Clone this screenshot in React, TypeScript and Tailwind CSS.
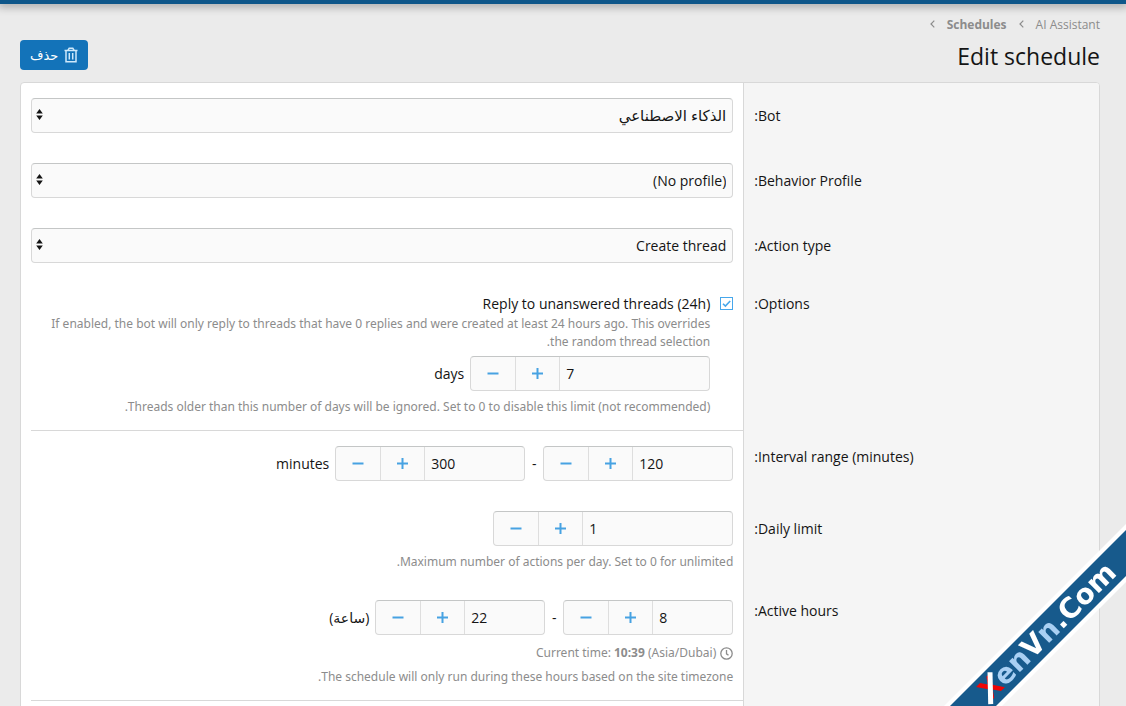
import React, { FC, InputHTMLAttributes, ReactNode, SelectHTMLAttributes, useState } from "react";
import { clsx } from "clsx";

interface FormRowProps {
  label: string;
  htmlFor?: string;
  // lines the label up with the text of the control next to it
  inputLabel?: boolean;
  children: ReactNode;
}

const FormRow: FC<FormRowProps> = ({ label, htmlFor, inputLabel, children }) => {
  return (
    <div className="flex">
      <div
        className={clsx(
          "w-[33%] shrink-0 border-l border-[#d8d8d8] bg-[#f5f5f5] px-2.5 text-left",
          inputLabel ? "pt-[22px]" : "pt-[15px]"
        )}
      >
        <label htmlFor={htmlFor} className="block">
          {label}:
        </label>
      </div>
      <div className="min-w-0 flex-1 px-2.5 py-[15px]">{children}</div>
    </div>
  );
};

const Separator = () => (
  <div className="flex">
    <div className="w-[33%] shrink-0 border-l border-[#d8d8d8] bg-[#f5f5f5]" />
    <hr className="ml-2.5 flex-1 border-[#d8d8d8]" />
  </div>
);

const Hint: FC<{ children: ReactNode; className?: string }> = ({ children, className }) => (
  <p
    className={clsx(
      "-mb-px pt-px font-['Noto_Sans','DejaVu_Sans',sans-serif] text-[12px] leading-[18px] text-[#8c8c8c]",
      className
    )}
  >
    {children}
  </p>
);

interface SelectBoxProps extends SelectHTMLAttributes<HTMLSelectElement> {
  options: string[];
}

const SelectBox: FC<SelectBoxProps> = ({ options, className, ...rest }) => {
  return (
    <div className="relative">
      <select
        {...rest}
        className={clsx(
          "block h-[35px] w-full appearance-none rounded border border-[#d8d8d8] border-t-[#c4c6c6] bg-[#fafafa] pr-1.5 pl-6",
          className
        )}
      >
        {options.map((option) => (
          <option key={option}>{option}</option>
        ))}
      </select>
      <svg
        className="pointer-events-none absolute top-[11px] left-[5px]"
        width="7"
        height="11"
        viewBox="0 0 7 11"
        fill="#141414"
      >
        <path d="M3.5 0 6.8 4.6H.2zM3.5 11 .2 6.4h6.6z" />
      </svg>
    </div>
  );
};

interface NumberBoxProps extends InputHTMLAttributes<HTMLInputElement> {
  initial: number;
  width: string;
}

const NumberBox: FC<NumberBoxProps> = ({ initial, width, ...rest }) => {
  const [value, setValue] = useState(initial);

  return (
    <div
      className={clsx(
        "flex h-[35px] overflow-hidden rounded border border-[#d8d8d8] border-t-[#c4c6c6] bg-[#fafafa]",
        width
      )}
    >
      <input
        {...rest}
        type="text"
        inputMode="numeric"
        dir="ltr"
        value={value}
        onChange={(e) => setValue(Number(e.target.value) || 0)}
        className="min-w-0 flex-1 px-1.5 outline-none"
      />
      <button
        type="button"
        aria-label="Increase"
        onClick={() => setValue(value + 1)}
        className="flex w-[45px] items-center justify-center border-x border-[#dedede]"
      >
        <svg width="11" height="11" viewBox="0 0 11 11" stroke="#47a2e2" strokeWidth="2">
          <path d="M0 5.5h11M5.5 0v11" />
        </svg>
      </button>
      <button
        type="button"
        aria-label="Decrease"
        onClick={() => setValue(value - 1)}
        className="flex w-[44px] items-center justify-center"
      >
        <svg width="12" height="11" viewBox="0 0 12 11" stroke="#47a2e2" strokeWidth="2">
          <path d="M.5 5.5h11" />
        </svg>
      </button>
    </div>
  );
};

const Chevron = () => (
  <svg width="5" height="8" viewBox="0 0 5 8" fill="none" stroke="#8c8c8c" strokeWidth="1.2">
    <path d="M4.3.7 1 4l3.3 3.3" />
  </svg>
);

const Ribbon = () => (
  <svg
    className="pointer-events-none fixed right-0 bottom-0 [direction:ltr]"
    width="182"
    height="182"
    viewBox="0 0 182 182"
  >
    <path d="M182 0v58L58 182H0z" fill="#fff" />
    <path d="M182 6v46L52 182H6z" fill="#175a8c" />
    <g transform="translate(46 178) rotate(-45)">
      <text fontFamily="'DejaVu Sans', sans-serif" fontSize="28" fontWeight="700" fill="#fff">
        <tspan fill="#f00505">X</tspan>
        <tspan fill="#a9d0f3">en</tspan>V<tspan fill="#a9d0f3">n</tspan>.Com
      </text>
      <path d="M-1 2 21-21" stroke="#fff" strokeWidth="5" />
    </g>
  </svg>
);

export default function App() {
  const [reply, setReply] = useState(true);

  return (
    <div
      dir="rtl"
      className="h-screen overflow-hidden bg-[#ebebeb] font-['Open_Sans','DejaVu_Sans',sans-serif] text-[14px] leading-[21px] text-[#141414]"
    >
      <div className="h-1 bg-[#0f578a] shadow-[0_1px_8px_2px_rgba(0,0,0,0.3)]" />

      <main className="pr-[26px] pl-5">
        <nav className="mt-[11px] flex h-[18px] items-center gap-3 text-[12px] text-[#8c8c8c]">
          <a href="#assistant">AI Assistant</a>
          <Chevron />
          <a href="#schedules" className="font-bold">
            Schedules
          </a>
          <Chevron />
        </nav>

        <header className="mt-[7px] flex items-center justify-between">
          <h1 className="pt-0.5 text-[23px] leading-[28px]">Edit schedule</h1>
          <button
            type="button"
            className="flex h-[30px] items-center gap-1.5 rounded bg-[#1373b9] px-2.5 text-[13px] text-white"
          >
            <svg width="14" height="16" viewBox="0 0 14 16" fill="none" stroke="#cfe9fb" strokeWidth="1.5">
              <path d="M.5 3.5h13M4 3.2l1.2-2h3.6l1.2 2M2 3.5v11.2h10V3.5M5.3 6v6.5M8.7 6v6.5" />
            </svg>
            حذف
          </button>
        </header>

        <form className="mt-3 overflow-hidden rounded border border-[#d8d8d8] bg-white">
          <FormRow label="Bot" htmlFor="bot" inputLabel>
            <SelectBox id="bot" className="text-[15px]" options={["الذكاء الاصطناعي"]} />
          </FormRow>
          <FormRow label="Behavior Profile" htmlFor="profile" inputLabel>
            <SelectBox id="profile" options={["(No profile)"]} />
          </FormRow>
          <FormRow label="Action type" htmlFor="action" inputLabel>
            <SelectBox id="action" options={["Create thread"]} />
          </FormRow>

          <FormRow label="Options" htmlFor="reply">
            <div className="flex gap-2.5">
              <div className="relative mt-1 size-[13px] shrink-0">
                <input
                  id="reply"
                  type="checkbox"
                  checked={reply}
                  onChange={(e) => setReply(e.target.checked)}
                  className="block size-[13px] appearance-none border border-[#47a7eb]"
                />
                {reply && (
                  <svg
                    className="pointer-events-none absolute inset-0"
                    width="13"
                    height="13"
                    viewBox="0 0 13 13"
                    fill="none"
                    stroke="#47a7eb"
                    strokeWidth="1.6"
                  >
                    <path d="m3 6.7 2.4 2.4L10.2 4" />
                  </svg>
                )}
              </div>
              <div className="min-w-0 flex-1">
                <label htmlFor="reply" className="block">
                  Reply to unanswered threads (24h)
                </label>
                <Hint>
                  If enabled, the bot will only reply to threads that have 0 replies and were created at
                  least 24 hours ago. This overrides the random thread selection.
                </Hint>
                <div className="mt-1.5 flex items-center gap-1.5">
                  <NumberBox initial={7} width="w-60" aria-label="Days" />
                  <span>days</span>
                </div>
                <Hint className="mt-1.5">
                  Threads older than this number of days will be ignored. Set to 0 to disable this limit
                  (not recommended).
                </Hint>
              </div>
            </div>
          </FormRow>

          <Separator />

          <FormRow label="Interval range (minutes)" htmlFor="interval">
            <div className="flex items-center gap-1.5">
              <NumberBox id="interval" initial={120} width="w-[190px]" />
              <span className="w-1.5 text-center">-</span>
              <NumberBox initial={300} width="w-[190px]" aria-label="Maximum interval" />
              <span>minutes</span>
            </div>
          </FormRow>

          <FormRow label="Daily limit" htmlFor="limit" inputLabel>
            <NumberBox id="limit" initial={1} width="w-60" />
            <Hint className="mt-1.5">Maximum number of actions per day. Set to 0 for unlimited.</Hint>
          </FormRow>

          <FormRow label="Active hours" htmlFor="hours">
            <div className="flex items-center gap-1.5">
              <NumberBox id="hours" initial={8} width="w-[170px]" />
              <span className="w-1.5 text-center">-</span>
              <NumberBox initial={22} width="w-[170px]" aria-label="Last hour" />
              <span>(ساعة)</span>
            </div>
            <Hint className="mt-2 flex items-center gap-1">
              <svg width="13" height="13" viewBox="0 0 13 13" fill="none" stroke="#8c8c8c" strokeWidth="1.3">
                <circle cx="6.5" cy="6.5" r="5.7" />
                <path d="M6.5 3v3.8l2 1.5" />
              </svg>
              <span>
                Current time: <strong>10:39</strong> (Asia/Dubai)
              </span>
            </Hint>
            <Hint className="mt-1.5">
              The schedule will only run during these hours based on the site timezone.
            </Hint>
          </FormRow>

          <Separator />

          <div className="flex h-14">
            <div className="w-[33%] shrink-0 border-l border-[#d8d8d8] bg-[#f5f5f5]" />
          </div>
        </form>
      </main>

      <Ribbon />
    </div>
  );
}
